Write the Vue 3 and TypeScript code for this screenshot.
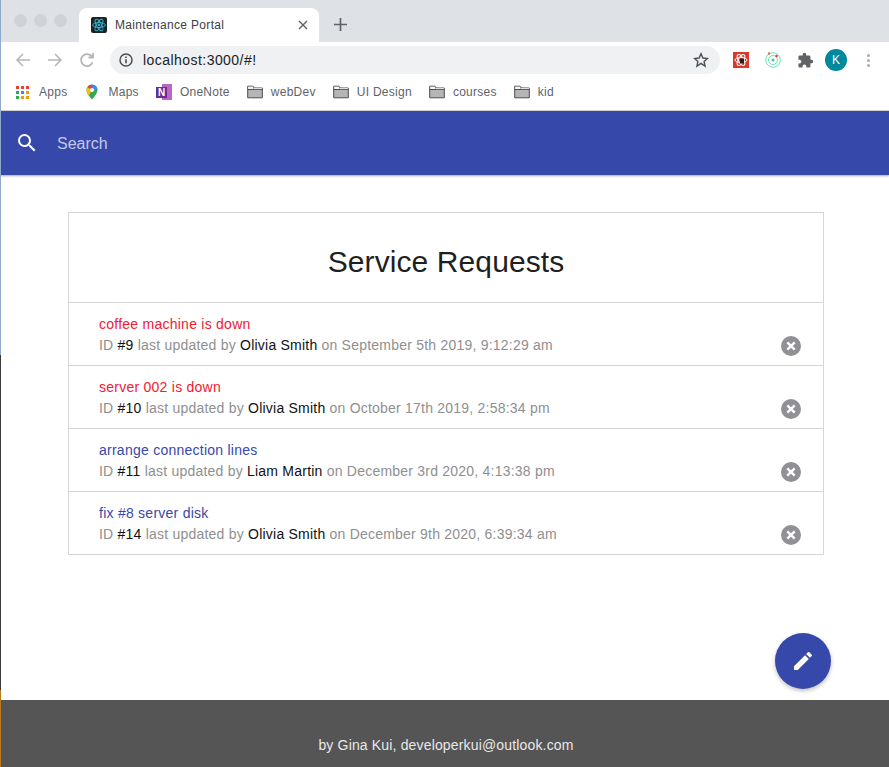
<script setup lang="ts">
type Bookmark = { label: string; icon: string }
type Request = { title: string; open: boolean; id: number; user: string; date: string }

const bookmarks: Bookmark[] = [
  { label: "Apps", icon: "apps" },
  { label: "Maps", icon: "maps" },
  { label: "OneNote", icon: "onenote" },
  { label: "webDev", icon: "folder" },
  { label: "UI Design", icon: "folder" },
  { label: "courses", icon: "folder" },
  { label: "kid", icon: "folder" },
]

const requests: Request[] = [
  { title: "coffee machine is down", open: true, id: 9, user: "Olivia Smith", date: "September 5th 2019, 9:12:29 am" },
  { title: "server 002 is down", open: true, id: 10, user: "Olivia Smith", date: "October 17th 2019, 2:58:34 pm" },
  { title: "arrange connection lines", open: false, id: 11, user: "Liam Martin", date: "December 3rd 2020, 4:13:38 pm" },
  { title: "fix #8 server disk", open: false, id: 14, user: "Olivia Smith", date: "December 9th 2020, 6:39:34 am" },
]

const appColors = ["#ea4335", "#ea4335", "#ea4335", "#34a853", "#4285f4", "#f29900", "#34a853", "#f29900", "#f29900"]
</script>

<template>
  <div class="window">
    <div class="tabstrip">
      <div class="lights"><i></i><i></i><i></i></div>
      <div class="tab">
        <svg class="favicon" viewBox="0 0 16 16">
          <rect width="16" height="16" rx="2" fill="#1a2327" />
          <g fill="none" stroke="#35b5cf" stroke-width="0.9">
            <ellipse cx="8" cy="8" rx="6.4" ry="2.5" />
            <ellipse cx="8" cy="8" rx="6.4" ry="2.5" transform="rotate(60 8 8)" />
            <ellipse cx="8" cy="8" rx="6.4" ry="2.5" transform="rotate(120 8 8)" />
          </g>
          <circle cx="8" cy="8" r="1.2" fill="#35b5cf" />
        </svg>
        <span class="tab-title">Maintenance Portal</span>
        <svg class="tab-close" viewBox="0 0 10 10"><path d="M1 1l8 8M9 1l-8 8" stroke="#5f6368" stroke-width="1.4" /></svg>
      </div>
      <svg class="new-tab" viewBox="0 0 12 12"><path d="M6 0v12M0 6h12" stroke="#5f6368" stroke-width="1.6" /></svg>
    </div>

    <div class="toolbar">
      <svg class="nav" viewBox="0 0 16 16"><path d="M15 8H2M8 2L2 8l6 6" fill="none" stroke="#b4b6b9" stroke-width="1.6" /></svg>
      <svg class="nav" viewBox="0 0 16 16"><path d="M1 8h13M8 2l6 6-6 6" fill="none" stroke="#b4b6b9" stroke-width="1.6" /></svg>
      <svg class="nav" viewBox="0 0 16 16"><path d="M13.6 10.4A6 6 0 1 1 13 4.6M14 1v4.5H9.5" fill="none" stroke="#b4b6b9" stroke-width="1.8" /></svg>
      <div class="omnibox">
        <svg class="info" viewBox="0 0 14 14">
          <circle cx="7" cy="7" r="6" fill="none" stroke="#4d5156" stroke-width="1.5" />
          <path d="M7 6.200v4M7 3.400v1.500" stroke="#3c4043" stroke-width="1.5" />
        </svg>
        <span class="url">localhost:3000/#!</span>
        <svg class="star" viewBox="0 0 16 16"><path d="M8 1.800l1.900 4.200 4.600.5-3.400 3.100 1 4.500L8 11.300l-4.100 2.800 1-4.500L1.500 6.500l4.600-.5z" fill="none" stroke="#4d5156" stroke-width="1.4" /></svg>
      </div>
      <div class="extensions">
        <svg class="ext" viewBox="0 0 16 16">
          <rect width="16" height="16" fill="#d8392b" />
          <g fill="none" stroke="#fff" stroke-width="1">
            <ellipse cx="8" cy="8" rx="6" ry="2.600" />
            <ellipse cx="8" cy="8" rx="6" ry="2.600" transform="rotate(60 8 8)" />
            <ellipse cx="8" cy="8" rx="6" ry="2.600" transform="rotate(120 8 8)" />
          </g>
          <rect x="7" y="6.500" width="4" height="5" fill="#2b2020" />
        </svg>
        <svg class="ext radar" viewBox="0 0 16 16">
          <g fill="none" stroke="#6fe0b4" stroke-width="1">
            <circle cx="8" cy="8" r="7.300" />
            <circle cx="8" cy="8" r="4.500" />
          </g>
          <circle cx="8" cy="8" r="1.600" fill="#3ecf8e" />
          <circle cx="4" cy="1.500" r="1.200" fill="#ee6b2f" />
          <circle cx="11.500" cy="4" r="1.200" fill="#d8392b" />
        </svg>
        <svg class="ext puzzle" viewBox="0 0 24 24"><path d="M20.500 11H19V7a2 2 0 0 0-2-2h-4V3.500a2.500 2.500 0 0 0-5 0V5H4a2 2 0 0 0-2 2v3.800h1.500a2.700 2.700 0 0 1 0 5.400H2V20a2 2 0 0 0 2 2h3.800v-1.500a2.700 2.700 0 0 1 5.400 0V22H17a2 2 0 0 0 2-2v-4h1.500a2.500 2.500 0 0 0 0-5z" fill="#5f6368" /></svg>
        <div class="avatar">K</div>
        <div class="kebab"><i></i><i></i><i></i></div>
      </div>
    </div>

    <div class="bookmarks">
      <div v-for="b in bookmarks" :key="b.label" class="bookmark">
        <div v-if="b.icon === 'apps'" class="apps-grid">
          <i v-for="(c, i) in appColors" :key="i" :style="{ background: c }"></i>
        </div>
        <svg v-else-if="b.icon === 'maps'" class="bm-icon" viewBox="0 0 16 16">
          <path d="M8 0.500a5.500 5.500 0 0 0-5.500 5.500c0 3.800 5.500 9.500 5.500 9.500s5.500-5.700 5.500-9.500A5.500 5.500 0 0 0 8 0.500z" fill="#34a853" />
          <path d="M3.200 3.300A5.500 5.500 0 0 1 8 0.500L8 6z" fill="#ea4335" />
          <path d="M8 0.500a5.500 5.500 0 0 1 5.500 5.500H8z" fill="#4285f4" />
          <path d="M2.500 6c0 1.800 1.200 3.800 2.500 5.500L8 6 3.200 3.300A5.500 5.500 0 0 0 2.500 6z" fill="#fbbc05" />
          <circle cx="8" cy="6" r="2" fill="#fff" />
        </svg>
        <svg v-else-if="b.icon === 'onenote'" class="bm-icon" viewBox="0 0 16 16">
          <rect x="6" y="0" width="10" height="16" fill="#b867c6" />
          <rect x="0" y="3" width="11" height="11" fill="#6a2c91" />
          <text x="2" y="12" class="n-mark">N</text>
        </svg>
        <svg v-else class="bm-icon folder" viewBox="0 0 16 14">
          <path d="M0.700 12.800V1.200h5.300l1.500 1.800h7.800v9.800z" fill="#b5b5b5" stroke="#4d4d4d" stroke-width="1" />
          <path d="M0.700 4.500h14.600" stroke="#4d4d4d" stroke-width="1" />
          <rect x="1.200" y="1.700" width="4.800" height="2.300" fill="#f4f4f4" />
          <rect x="7" y="3.200" width="8" height="0.900" fill="#f4f4f4" />
        </svg>
        <span>{{ b.label }}</span>
      </div>
    </div>

    <div class="page">
      <header class="search-bar">
        <svg class="search-icon" viewBox="0 0 24 24"><path d="M15.500 14h-.79l-.28-.27A6.471 6.471 0 0 0 16 9.500 6.500 6.500 0 1 0 9.500 16c1.610 0 3.090-.59 4.230-1.570l.27.28v.79l5 4.990L20.490 19l-4.990-5zm-6 0C7.010 14 5 11.990 5 9.500S7.010 5 9.500 5 14 7.010 14 9.500 11.990 14 9.500 14z" fill="#fff" /></svg>
        <span class="search-label">Search</span>
      </header>

      <main class="content">
        <section class="card">
          <h1>Service Requests</h1>
          <div v-for="r in requests" :key="r.id" class="row">
            <div class="row-text">
              <div class="title" :class="{ open: r.open }">{{ r.title }}</div>
              <div class="meta">
                ID <span class="dark">#{{ r.id }}</span> last updated by
                <span class="dark">{{ r.user }}</span> on {{ r.date }}
              </div>
            </div>
            <svg class="delete" viewBox="0 0 20 20">
              <circle cx="10" cy="10" r="10" fill="#919195" />
              <path d="M6.300 6.300l7.400 7.400M13.700 6.300l-7.400 7.400" stroke="#fff" stroke-width="2.400" />
            </svg>
          </div>
        </section>
        <button class="fab" type="button">
          <svg viewBox="0 0 24 24"><path d="M3 17.250V21h3.750L17.810 9.940l-3.750-3.750L3 17.250zM20.710 7.040a1 1 0 0 0 0-1.410l-2.340-2.340a1 1 0 0 0-1.410 0l-1.830 1.830 3.750 3.750 1.830-1.830z" fill="#fff" /></svg>
        </button>
      </main>

      <footer class="footer">by Gina Kui, developerkui@outlook.com</footer>
    </div>
  </div>
</template>

<style>
html,
body {
  margin: 0;
  background: #fff;
}
</style>

<style scoped>
.window {
  position: relative;
  width: 889px;
  height: 767px;
  display: flex;
  flex-direction: column;
  overflow: hidden;
  font-family: "Liberation Sans", Arial, sans-serif;
  background: #fff;
}

/* sliver of desktop showing past the browser's left edge */
.window::before {
  content: "";
  position: absolute;
  z-index: 2;
  left: 0;
  top: 0;
  width: 1px;
  height: 100%;
  background: linear-gradient(#8fa9cc 0 355px, #3d3a3c 355px 690px, #b97a1e 690px);
}

.tabstrip {
  height: 42px;
  flex: none;
  background: #dee1e6;
  display: flex;
  align-items: flex-end;
  box-sizing: border-box;
}

.lights {
  display: flex;
  gap: 7px;
  width: 79px;
  box-sizing: border-box;
  padding: 0 0 15px 14px;
}

.lights i {
  width: 13px;
  height: 13px;
  border-radius: 50%;
  background: #d0d2d5;
}

.tab {
  width: 240px;
  height: 34px;
  background: #fff;
  border-radius: 8px 8px 0 0;
  display: flex;
  align-items: center;
  box-sizing: border-box;
  padding: 0 10px 0 12px;
  font-size: 12px;
  letter-spacing: 0.33px;
  color: #3c4043;
}

.favicon {
  width: 16px;
  height: 16px;
  margin-right: 8px;
}

.tab-title {
  flex: 1;
}

.tab-close {
  width: 10px;
  height: 10px;
  margin-right: 1px;
}

.new-tab {
  width: 13px;
  height: 13px;
  margin: 0 0 11px 15px;
}

.toolbar {
  height: 36px;
  flex: none;
  display: flex;
  align-items: center;
  box-sizing: border-box;
  padding-left: 15px;
}

.nav {
  width: 16px;
  height: 16px;
  margin-right: 16px;
}

.omnibox {
  width: 610px;
  height: 28px;
  margin-left: -1px;
  border-radius: 14px;
  background: #eff1f3;
  display: flex;
  align-items: center;
  box-sizing: border-box;
  padding: 0 11px 0 9px;
}

.info {
  width: 14px;
  height: 14px;
  margin-right: 10px;
}

.url {
  flex: 1;
  font-size: 14px;
  letter-spacing: 0.45px;
  color: #202124;
}

.star {
  width: 16px;
  height: 16px;
}

.extensions {
  display: flex;
  align-items: center;
  margin-left: 13px;
}

.ext {
  width: 16px;
  height: 16px;
  margin-right: 16px;
}

.puzzle {
  width: 17px;
  height: 17px;
  margin-right: 11px;
}

.avatar {
  width: 22px;
  height: 22px;
  border-radius: 50%;
  background: #00899c;
  color: #fff;
  font-size: 12px;
  line-height: 22px;
  text-align: center;
  margin-right: 20px;
}

.kebab {
  display: flex;
  flex-direction: column;
  gap: 2px;
}

.kebab i {
  width: 3px;
  height: 3px;
  border-radius: 50%;
  background: #a9abae;
}

.bookmarks {
  height: 33px;
  flex: none;
  display: flex;
  align-items: center;
  box-sizing: border-box;
  padding: 0 0 4px 16px;
  gap: 17px;
  font-size: 12px;
  letter-spacing: 0.27px;
  color: #5f6368;
  border-bottom: 1px solid #d3d5d8;
}

.bookmark {
  display: flex;
  align-items: center;
  gap: 8px;
}

.apps-grid {
  display: grid;
  grid-template-columns: repeat(3, 3px);
  grid-auto-rows: 3px;
  gap: 2px;
  margin-right: 2px;
}

.bm-icon {
  width: 16px;
  height: 16px;
}

.folder {
  height: 14px;
}

.n-mark {
  font-size: 10px;
  font-weight: 700;
  fill: #fff;
}

.page {
  flex: 1;
  min-height: 0;
  display: flex;
  flex-direction: column;
}

.search-bar {
  height: 64px;
  flex: none;
  background: #3748ab;
  box-shadow: 0 1px 2px rgba(0, 0, 0, 0.35);
  display: flex;
  align-items: center;
  box-sizing: border-box;
  padding-left: 15px;
  position: relative;
}

.search-icon {
  width: 24px;
  height: 24px;
  margin-right: 18px;
}

.search-label {
  font-size: 16px;
  padding-top: 1px;
  color: #c4c8e4;
}

.content {
  flex: 1;
  min-height: 0;
  position: relative;
  box-sizing: border-box;
  padding: 37px 65px 0 68px;
}

.card {
  border: 1px solid #d6d6d6;
}

h1 {
  margin: 0;
  height: 89px;
  font-size: 30px;
  font-weight: 400;
  letter-spacing: 0.1px;
  line-height: 98px;
  text-align: center;
  color: #1f1f1f;
}

.row {
  height: 63px;
  box-sizing: border-box;
  border-top: 1px solid #d6d6d6;
  display: flex;
  align-items: flex-end;
  padding: 0 22px 9px 30px;
}

.row-text {
  flex: 1;
}

.title {
  font-size: 14px;
  letter-spacing: 0.25px;
  line-height: 21px;
  color: #3748ab;
}

.title.open {
  color: #f0202f;
}

.meta {
  font-size: 14px;
  letter-spacing: 0.22px;
  line-height: 21px;
  color: #8f8f8f;
}

.dark {
  color: #111;
}

.delete {
  width: 20px;
  height: 20px;
}

.fab {
  position: absolute;
  left: 775px;
  top: 458px;
  width: 56px;
  height: 56px;
  border: none;
  border-radius: 50%;
  background: #3748ab;
  box-shadow: 0 2px 4px rgba(0, 0, 0, 0.25);
  padding: 16px;
}

.fab svg {
  width: 24px;
  height: 24px;
  display: block;
}

.footer {
  height: 67px;
  flex: none;
  box-sizing: border-box;
  padding-left: 3px;
  background: #555;
  color: #e8e8e8;
  font-size: 14px;
  letter-spacing: 0.16px;
  line-height: 90px;
  text-align: center;
}
</style>
